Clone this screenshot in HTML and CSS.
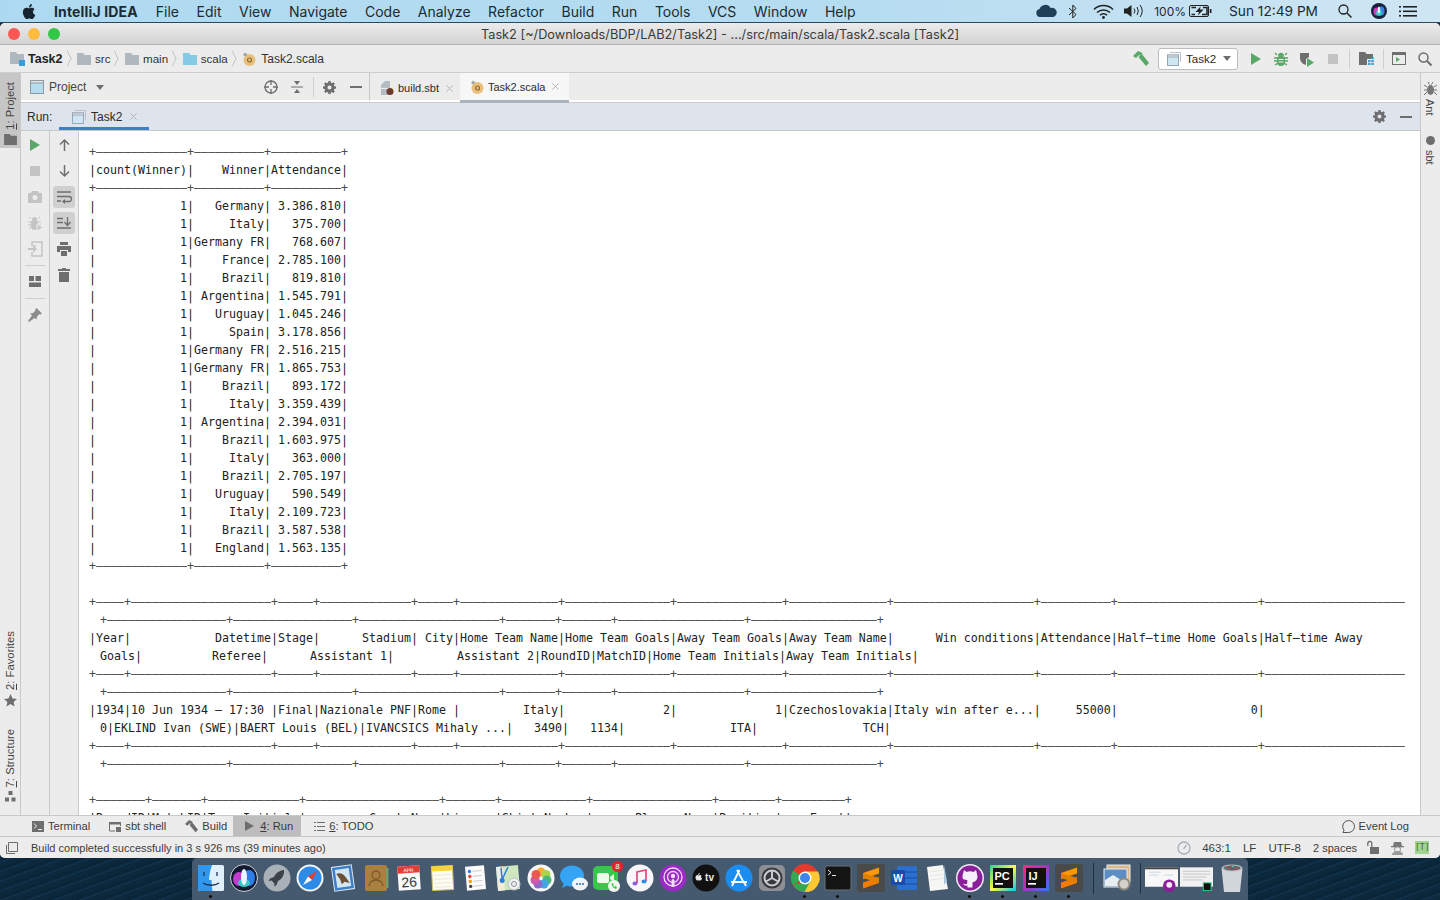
FILE: index.html
```html
<!DOCTYPE html>
<html lang="en">
<head>
    <meta charset="UTF-8">
    <title>IntelliJ IDEA - Task2</title>
    <link rel="stylesheet" href="styles.css">
</head>
<body>
    <svg class="defs" width="0" height="0">
        <symbol id="folder" viewBox="0 0 14 12"><path d="M0 0h6l1.500 2H14v10H0z"/></symbol>
        <symbol id="gear" viewBox="0 0 14 14"><path fill-rule="evenodd" d="M5.800 0h2.400l.3 1.900 1.100.5L11.200 1.300l1.600 1.600-1.100 1.600.5 1.100 1.800.3v2.300l-1.800.4-.5 1.100 1.100 1.600-1.600 1.600-1.600-1.100-1.100.5-.3 1.800H5.800l-.3-1.800-1.100-.5-1.600 1.100-1.600-1.600 1.100-1.600-.5-1.100L0 8.200V5.900l1.800-.3.5-1.100-1.100-1.600 1.600-1.600 1.600 1.100 1.100-.5zM7 4.800a2.200 2.200 0 1 0 0 4.400 2.200 2.200 0 0 0 0-4.400z"/></symbol>
        <symbol id="scala" viewBox="0 0 14 14"><circle cx="7.500" cy="8" r="6" fill="#e9bf7d"/><circle cx="7.500" cy="8" r="2" fill="none" stroke="#8a6a30" stroke-width="1.200"/><path d="M1 3l2-2.500 2.500 2L3 4.500z" fill="#9aa5ad"/></symbol>
        <symbol id="runconf" viewBox="0 0 14 14"><path d="M3 .5h10.500V10" fill="none" stroke="#b9c3cc"/><rect x=".5" y="3" width="11" height="10.500" fill="#cfe6f3" stroke="#9aa7b2"/><rect x=".5" y="3" width="11" height="2" fill="#e8edf1" stroke="#9aa7b2"/></symbol>
        <symbol id="cross" viewBox="0 0 10 10"><path d="M1.500 1.500l7 7M8.500 1.500l-7 7" fill="none" stroke="#b4b4b4" stroke-width="1.100"/></symbol>
        <symbol id="sublime" viewBox="0 0 30 30"><rect x="1" y="1" width="28" height="28" rx="3" fill="#4a4a4a"/><path d="M23 4.500v6L7 16v-6z" fill="#ff9800"/><path d="M7 25.500v-6l16-5.500v6z" fill="#f57c00"/><path d="M7 10l16 5v5L7 15z" fill="#e08000"/></symbol>
    </svg>

    <header class="menubar">
        <svg class="apple" viewBox="0 0 24 24"><path d="M18.700 12.600c0-2.500 2-3.700 2.100-3.800-1.200-1.700-3-1.900-3.600-1.900-1.500-.2-3 .9-3.800.9-.8 0-2-.9-3.300-.9-1.700 0-3.300 1-4.100 2.500-1.800 3.100-.5 7.600 1.300 10.100.9 1.200 1.900 2.600 3.200 2.500 1.300-.1 1.800-.8 3.300-.8s2 .8 3.300.8c1.400 0 2.200-1.200 3.100-2.500 1-1.400 1.400-2.800 1.400-2.900-.1 0-2.700-1-3-4zM16.200 5.200c.7-.9 1.200-2 1-3.200-1 0-2.200.7-2.900 1.500-.6.700-1.200 1.900-1 3 1.100.1 2.200-.5 2.900-1.300z"/></svg>
        <strong class="app-name">IntelliJ IDEA</strong>
        <nav class="menu">
            <span>File</span><span>Edit</span><span>View</span><span>Navigate</span><span>Code</span><span>Analyze</span><span>Refactor</span><span>Build</span><span>Run</span><span>Tools</span><span>VCS</span><span>Window</span><span>Help</span>
        </nav>
        <div class="status-items">
            <svg class="si-cloud" width="21" height="12" viewBox="0 0 21 12"><path d="M4 12a4 4 0 0 1-.5-7.900A6 6 0 0 1 14.500 3a4.500 4.500 0 0 1 3 9z" fill="#1f3f57"/></svg>
            <svg class="si-bt" width="10" height="15" viewBox="0 0 10 15"><path d="M1 4l7 6.500L4.800 14V1L8 4.500 1 11" fill="none" stroke="#222" stroke-width="1"/></svg>
            <svg class="si-wifi" width="21" height="15" viewBox="0 0 21 15"><g fill="none" stroke="#222" stroke-width="1.500"><path d="M1 5.500a13.500 13.500 0 0 1 19 0"/><path d="M4 8.500a9.500 9.500 0 0 1 13 0"/><path d="M7 11.300a5 5 0 0 1 7 0"/></g><circle cx="10.500" cy="13.500" r="1.400" fill="#222"/></svg>
            <svg class="si-vol" width="21" height="14" viewBox="0 0 21 14"><path d="M0 4.500h3L7.500 1v12L3 9.500H0z" fill="#222"/><g fill="none" stroke="#222"><path d="M10 4.500a4 4 0 0 1 0 5"/><path d="M13 3a7 7 0 0 1 0 8"/><path d="M16 1a10 10 0 0 1 0 12"/></g></svg>
            <span class="si-pct">100%</span>
            <svg class="si-batt" width="23" height="12" viewBox="0 0 23 12"><rect x=".5" y=".5" width="19" height="11" rx="1.500" fill="none" stroke="#222"/><path d="M2.500 2.500h4.500M2.500 9.500H6" stroke="#222" stroke-width="1.600"/><path d="M11.500 1.500L6.500 7h3.500l-1 3.500 5.500-6h-3.500z" fill="#222"/><path d="M14 2.500h4v7h-5" fill="none" stroke="#222" stroke-width="1.600"/><rect x="20.800" y="4" width="1.700" height="4" fill="#222"/></svg>
            <span class="si-clock">Sun 12:49 PM</span>
            <svg class="si-search" width="14" height="14" viewBox="0 0 14 14"><circle cx="5.500" cy="5.500" r="4.500" fill="none" stroke="#222" stroke-width="1.300"/><path d="M9 9l4.500 4.500" stroke="#222" stroke-width="1.500"/></svg>
            <svg class="si-siri" width="16" height="16" viewBox="0 0 16 16"><circle cx="8" cy="8" r="8" fill="#16203a"/><ellipse cx="5.500" cy="8.500" rx="3" ry="4" fill="#d63ac0"/><ellipse cx="10.500" cy="8" rx="3" ry="4.500" fill="#2f86e8"/><ellipse cx="8" cy="10" rx="3" ry="3" fill="#35c8c4"/><ellipse cx="8" cy="7" rx="1.200" ry="3.500" fill="#e9f6ff"/></svg>
            <svg class="si-list" width="18" height="11" viewBox="0 0 18 11"><g fill="#222"><rect width="2" height="1.600"/><rect y="4.500" width="2" height="1.600"/><rect y="9" width="2" height="1.600"/><rect x="4" width="14" height="1.600"/><rect x="4" y="4.500" width="14" height="1.600"/><rect x="4" y="9" width="14" height="1.600"/></g></svg>
        </div>
    </header>

    <main class="window">
        <div class="titlebar">
            <div class="lights"><i class="red"></i><i class="yellow"></i><i class="green"></i></div>
            <span>Task2 [~/Downloads/BDP/LAB2/Task2] - .../src/main/scala/Task2.scala [Task2]</span>
        </div>

        <div class="navbar">
            <div class="crumbs">
                <span class="crumb"><svg class="ic-folder" width="14" height="14" viewBox="0 0 14 14"><use href="#folder" width="14" height="12"/><rect x="9" y="8" width="6" height="6" fill="#389fd6"/></svg><b>Task2</b></span>
                <span class="crumb"><svg class="ic-folder" width="14" height="12"><use href="#folder"/></svg>src</span>
                <span class="crumb"><svg class="ic-folder" width="14" height="12"><use href="#folder"/></svg>main</span>
                <span class="crumb"><svg class="ic-folder blue" width="14" height="12"><use href="#folder"/></svg>scala</span>
                <span class="crumb last"><svg width="14" height="14"><use href="#scala"/></svg>Task2.scala</span>
            </div>
            <div class="nav-tools">
                <svg width="16" height="16" viewBox="0 0 16 16"><path d="M0 5l5-5 4.500 2L7.500 5 6 4 3 7z" fill="#59a869"/><path d="M5.500 6l3.500-3 7 9-3 3z" fill="#59a869"/></svg>
                <div class="run-select"><svg width="14" height="14"><use href="#runconf"/></svg><span>Task2</span><i class="caret"></i></div>
                <svg class="t-run" width="12" height="12" viewBox="0 0 12 12"><path d="M1 0l10 6-10 6z" fill="#59a869"/></svg>
                <svg class="t-bug" width="14" height="14" viewBox="0 0 14 14"><g fill="#59a869"><path d="M3 5h8v5a4 4 0 0 1-8 0z"/><circle cx="7" cy="3.500" r="2.800"/></g><g stroke="#59a869" stroke-width="1.400"><path d="M0 6h14M0 9h14M1 13l3-2M13 13l-3-2M1 1l2 2M13 1l-2 2"/></g><path d="M4.500 7.500h5M4.500 10h5" stroke="#eee"/></svg>
                <svg class="t-cov" width="16" height="16" viewBox="0 0 16 16"><path d="M1 2h9v4L7 8v6C3 13 1 10 1 7z" fill="#6e6e6e"/><path d="M8 7l7 4.500L8 16z" fill="#59a869"/></svg>
                <i class="t-stop"></i>
                <i class="vsep"></i>
                <svg width="15" height="13" viewBox="0 0 15 13"><path d="M0 0h6l1.500 2H14v5H8v6H0z" fill="#6e6e6e"/><g fill="#389fd6"><rect x="9" y="8" width="2.500" height="2.200"/><rect x="12.300" y="8" width="2.500" height="2.200"/><rect x="9" y="11" width="2.500" height="2"/><rect x="12.300" y="11" width="2.500" height="2"/><rect x="12.300" y="5" width="2.500" height="2.200"/></g></svg>
                <i class="vsep second"></i>
                <svg width="14" height="13" viewBox="0 0 14 13"><rect x=".5" y=".5" width="13" height="12" fill="none" stroke="#6e6e6e"/><rect y="0" width="14" height="3" fill="#6e6e6e"/><path d="M4 5l4 2.500L4 10z" fill="#59a869"/></svg>
                <svg class="t-find" width="14" height="14" viewBox="0 0 14 14"><circle cx="5.500" cy="5.500" r="4.500" fill="none" stroke="#6e6e6e" stroke-width="1.500"/><path d="M9 9l4.500 4.500" stroke="#6e6e6e" stroke-width="2"/></svg>
            </div>
        </div>

        <div class="workspace">
            <aside class="strip left">
                <div class="strip-btn active"><span class="vtext"><u>1</u>: Project</span><svg width="13" height="11"><use href="#folder"/></svg></div>
                <div class="strip-btn favorites"><span class="vtext"><u>2</u>: Favorites</span><svg width="13" height="13" viewBox="0 0 13 13"><path d="M6.500 0l2 4.500 4.500.4-3.400 3 1 4.600-4.100-2.400-4.100 2.400 1-4.600L0 4.900l4.500-.4z"/></svg></div>
                <div class="strip-btn"><span class="vtext"><u>7</u>: Structure</span><svg width="11" height="11" viewBox="0 0 11 11"><rect x="3.500" width="4" height="4"/><rect y="6.500" width="4" height="4"/><rect x="6.500" y="6.500" width="4" height="4"/></svg></div>
            </aside>

            <div class="center">
                <div class="top-row">
                    <div class="project-head">
                        <svg class="proj-ic" width="14" height="14" viewBox="0 0 14 14"><rect x=".5" y=".5" width="13" height="13" fill="#b5dcef" stroke="#8d99a3"/><rect x=".5" y=".5" width="13" height="2.500" fill="#e5e5e5" stroke="#8d99a3"/></svg>
                        <span>Project</span><i class="caret"></i>
                        <div class="head-tools">
                            <svg class="target" width="14" height="14" viewBox="0 0 14 14"><circle cx="7" cy="7" r="6" fill="none" stroke="#6e6e6e" stroke-width="1.300"/><path d="M7 0v5M7 9v5M0 7h5M9 7h5" stroke="#6e6e6e" stroke-width="1.300"/></svg>
                            <svg width="12" height="12" viewBox="0 0 12 12"><path d="M0 6h12" stroke="#6e6e6e"/><path d="M3 0h6L6 4zM3 12h6L6 8z" fill="#6e6e6e"/></svg>
                            <i class="vsep"></i>
                            <svg class="gear" width="13" height="13"><use href="#gear"/></svg>
                            <i class="dash"></i>
                        </div>
                    </div>
                    <div class="editor-tabs">
                        <div class="etab">
                            <svg width="13" height="14" viewBox="0 0 13 14"><path d="M4 0h5v7H0V4z" fill="#b5bcc2"/><path d="M0 8h7v6H0z" fill="#b5bcc2"/><circle cx="9" cy="10.500" r="3.500" fill="#6b3a2e"/></svg>
                            <span>build.sbt</span><svg width="9" height="9"><use href="#cross"/></svg>
                        </div>
                        <div class="etab current">
                            <svg width="14" height="14"><use href="#scala"/></svg>
                            <span>Task2.scala</span><svg width="9" height="9"><use href="#cross"/></svg>
                        </div>
                    </div>
                </div>

                <div class="run-head">
                    <span class="run-label">Run:</span>
                    <div class="run-tab">
                        <svg width="14" height="14"><use href="#runconf"/></svg>
                        <span>Task2</span><svg width="9" height="9"><use href="#cross"/></svg>
                    </div>
                    <div class="head-tools">
                        <svg class="gear" width="13" height="13"><use href="#gear"/></svg>
                        <i class="dash"></i>
                    </div>
                </div>

                <div class="run-body">
                    <div class="tool-col">
                        <div class="tool"><svg width="12" height="12" viewBox="0 0 12 12"><path d="M1 0l10 6-10 6z" fill="#59a869"/></svg></div>
                        <div class="tool"><i class="t-stop"></i></div>
                        <div class="tool"><svg width="14" height="12" viewBox="0 0 14 12"><path fill-rule="evenodd" d="M4 0h6l1 2h3v10H0V2h3zM7 4a2.500 2.500 0 1 0 0 5 2.500 2.500 0 0 0 0-5z" fill="#c4c4c4"/></svg></div>
                        <div class="tool"><svg width="15" height="15" viewBox="0 0 15 15"><g fill="#c4c4c4"><path d="M3 5h7v5a3.500 4 0 0 1-7 0z"/><circle cx="6.500" cy="3.500" r="2.500"/></g><g stroke="#c4c4c4"><path d="M0 6h13M0 9h13M1 13l2-2M1 1l2 2M12 1l-2 2"/></g><path d="M9 8l6 3.500L9 15z" fill="#c4c4c4" stroke="#eee"/></svg></div>
                        <div class="tool"><svg width="15" height="14" viewBox="0 0 15 14"><path d="M4 4V0h10v14H4v-4M5 4h3" fill="none" stroke="#c4c4c4" stroke-width="1.500"/><path d="M0 6h5V3l4 4-4 4V8H0z" fill="#c4c4c4"/></svg></div>
                        <i class="hsep"></i>
                        <div class="tool"><svg width="12" height="12" viewBox="0 0 12 12"><path d="M0 0h5v5H0zM6.500 0H12v5H6.500zM0 6.500h12V11H0z" fill="#6e6e6e"/></svg></div>
                        <i class="hsep"></i>
                        <div class="tool"><svg width="14" height="14" viewBox="0 0 14 14"><path d="M8.500 0L14 5.500l-1.500 1-1-.5L9 8.500l-.5 3L6.500 10 1 14 0 13l4-5.500-2-2 3-.5 2.500-2.500-.5-1z" fill="#8c8c8c"/></svg></div>
                    </div>
                    <div class="tool-col">
                        <div class="tool"><svg width="11" height="12" viewBox="0 0 11 12"><path d="M5.500 12V1M1 5.500L5.500 1 10 5.500" fill="none" stroke="#6e6e6e" stroke-width="1.500"/></svg></div>
                        <div class="tool"><svg width="11" height="12" viewBox="0 0 11 12"><path d="M5.500 0v11M1 6.500L5.500 11 10 6.500" fill="none" stroke="#6e6e6e" stroke-width="1.500"/></svg></div>
                        <div class="tool on"><svg width="14" height="12" viewBox="0 0 14 12"><path d="M0 1h14M0 5.500h12a2.500 2.500 0 0 1 0 5H7M0 10h4" fill="none" stroke="#6e6e6e" stroke-width="1.300"/><path d="M8 8v5L5 10.500z" fill="#6e6e6e"/></svg></div>
                        <div class="tool on"><svg width="14" height="12" viewBox="0 0 14 12"><path d="M0 1.500h6M0 5.500h6M0 11h14M10.500 0v8M7.500 5l3 3.500 3-3.500" fill="none" stroke="#6e6e6e" stroke-width="1.300"/></svg></div>
                        <div class="tool"><svg width="14" height="14" viewBox="0 0 14 14"><path d="M3 0h8v3H3zM0 4h14v6h-3V8H3v2H0zM4 9h6v5H4z" fill="#6e6e6e"/></svg></div>
                        <div class="tool"><svg width="12" height="14" viewBox="0 0 12 14"><path d="M4 0h4v1h4v2H0V1h4zM1 4h10v10H1z" fill="#6e6e6e"/></svg></div>
                    </div>
<pre class="console"><span class="rule">+–––––––––––––+––––––––––+––––––––––+</span>
|count(Winner)|    Winner|Attendance|
<span class="rule">+–––––––––––––+––––––––––+––––––––––+</span>
|            1|   Germany| 3.386.810|
|            1|     Italy|   375.700|
|            1|Germany FR|   768.607|
|            1|    France| 2.785.100|
|            1|    Brazil|   819.810|
|            1| Argentina| 1.545.791|
|            1|   Uruguay| 1.045.246|
|            1|     Spain| 3.178.856|
|            1|Germany FR| 2.516.215|
|            1|Germany FR| 1.865.753|
|            1|    Brazil|   893.172|
|            1|     Italy| 3.359.439|
|            1| Argentina| 2.394.031|
|            1|    Brazil| 1.603.975|
|            1|     Italy|   363.000|
|            1|    Brazil| 2.705.197|
|            1|   Uruguay|   590.549|
|            1|     Italy| 2.109.723|
|            1|    Brazil| 3.587.538|
|            1|   England| 1.563.135|
<span class="rule">+–––––––––––––+––––––––––+––––––––––+</span>

<span class="rule">+––––+––––––––––––––––––––+–––––+–––––––––––––+–––––+––––––––––––––+–––––––––––––––+–––––––––––––––+––––––––––––––+––––––––––––––––––––+––––––––––+––––––––––––––––––––+––––––––––––––––––––</span>
<span class="wrap rule">+–––––––––––––––––+–––––––––––––––––+––––––––––––––––––––+–––––––+–––––––+––––––––––––––––––+––––––––––––––––––+</span>
|Year|            Datetime|Stage|      Stadium| City|Home Team Name|Home Team Goals|Away Team Goals|Away Team Name|      Win conditions|Attendance|Half–time Home Goals|Half–time Away
<span class="wrap">Goals|          Referee|      Assistant 1|         Assistant 2|RoundID|MatchID|Home Team Initials|Away Team Initials|</span>
<span class="rule">+––––+––––––––––––––––––––+–––––+–––––––––––––+–––––+––––––––––––––+–––––––––––––––+–––––––––––––––+––––––––––––––+––––––––––––––––––––+––––––––––+––––––––––––––––––––+––––––––––––––––––––</span>
<span class="wrap rule">+–––––––––––––––––+–––––––––––––––––+––––––––––––––––––––+–––––––+–––––––+––––––––––––––––––+––––––––––––––––––+</span>
|1934|10 Jun 1934 – 17:30 |Final|Nazionale PNF|Rome |         Italy|              2|              1|Czechoslovakia|Italy win after e...|     55000|                   0|
<span class="wrap">0|EKLIND Ivan (SWE)|BAERT Louis (BEL)|IVANCSICS Mihaly ...|   3490|   1134|               ITA|               TCH|</span>
<span class="rule">+––––+––––––––––––––––––––+–––––+–––––––––––––+–––––+––––––––––––––+–––––––––––––––+–––––––––––––––+––––––––––––––+––––––––––––––––––––+––––––––––+––––––––––––––––––––+––––––––––––––––––––</span>
<span class="wrap rule">+–––––––––––––––––+–––––––––––––––––+––––––––––––––––––––+–––––––+–––––––+––––––––––––––––––+––––––––––––––––––+</span>

<span class="rule">+–––––––+–––––––+–––––––––––––+–––––––––––––––––––+–––––––+––––––––––––+–––––––––––––––––+––––––––+–––––––––+</span>
|RoundID|MatchID|Team Initials|         Coach Name|Line–up|Shirt Number|      Player Name|Position|    Event|
</pre>
                </div>
            </div>

            <aside class="strip right">
                <div class="strip-btn"><svg width="13" height="14" viewBox="0 0 13 14"><g stroke="#777" fill="none"><path d="M0 3l3 2M13 3l-3 2M0 8h3M13 8h-3M0 13l3-3M13 13l-3-3M4 0l1.500 2.500M9 0L7.500 2.500"/></g><ellipse cx="6.500" cy="8" rx="3.500" ry="5" fill="#777"/></svg><span class="vtext down">Ant</span></div>
                <div class="strip-btn sbt"><i class="dot"></i><span class="vtext down">sbt</span></div>
            </aside>
        </div>

        <div class="tool-bar">
            <div class="tw"><svg width="12" height="11" viewBox="0 0 12 11"><rect width="12" height="11" fill="#6e6e6e"/><path d="M2 2.500L4.500 5 2 7.500M6 8.500h4" fill="none" stroke="#eee"/></svg><span>Terminal</span></div>
            <div class="tw"><svg width="12" height="11" viewBox="0 0 12 11"><path d="M.5 10V1.500h11V5M.5 10H6" fill="none" stroke="#6e6e6e"/><rect y="1" width="12" height="2.500" fill="#6e6e6e"/><rect x="7" y="6" width="5" height="5" fill="#6e6e6e"/></svg><span>sbt shell</span></div>
            <div class="tw"><svg width="13" height="13" viewBox="0 0 16 16"><path d="M0 5l5-5 4.500 2L7.500 5 6 4 3 7z" fill="#6e6e6e"/><path d="M5.500 6l3.500-3 7 9-3 3z" fill="#6e6e6e"/></svg><span>Build</span></div>
            <div class="tw active"><svg width="9" height="10" viewBox="0 0 9 10"><path d="M0 0l9 5-9 5z" fill="#6e6e6e"/></svg><span><u>4</u>: Run</span></div>
            <div class="tw"><svg width="11" height="9" viewBox="0 0 11 9"><path d="M0 .5h2M3 .5h8M0 4.500h2M3 4.500h8M0 8.500h2M3 8.500h8" stroke="#6e6e6e"/></svg><span><u>6</u>: TODO</span></div>
            <div class="tw event"><svg width="13" height="13" viewBox="0 0 13 13"><path d="M6.500.5a6 6 0 1 1 0 12H1l1-2.200A6 6 0 0 1 6.500.5z" fill="none" stroke="#555"/></svg><span>Event Log</span></div>
        </div>

        <div class="status-bar">
            <svg class="box-ic" width="12" height="12" viewBox="0 0 12 12"><path d="M2.500.5h9v9h-9zM.5 3v8.500H9" fill="none" stroke="#6e6e6e"/></svg>
            <span class="build-msg">Build completed successfully in 3 s 926 ms (39 minutes ago)</span>
            <div class="status-right">
                <svg width="14" height="14" viewBox="0 0 14 14"><circle cx="7" cy="7" r="6" fill="none" stroke="#a7b1b9" stroke-width="1.300"/><path d="M6.500 8l3-4" stroke="#a7b1b9" stroke-width="1.300"/></svg>
                <span class="pos">463:1</span>
                <span>LF</span>
                <span>UTF-8</span>
                <span class="indent">2 spaces</span>
                <svg class="lock" width="12" height="13" viewBox="0 0 12 13"><path d="M.8 5V2.500a2 2 0 0 1 4 0V6" fill="none" stroke="#6e6e6e" stroke-width="1.300"/><rect x="3" y="6" width="9" height="7" fill="#6e6e6e"/></svg>
                <svg width="13" height="14" viewBox="0 0 13 14"><path d="M3 1h7l1 4H2z" fill="#777"/><rect y="5" width="13" height="1.300" fill="#777"/><circle cx="6.500" cy="8.500" r="3" fill="none" stroke="#888"/><path d="M1 14a5.500 4 0 0 1 11 0" fill="#999"/></svg>
                <span class="t-badge">[T]</span>
            </div>
        </div>
    </main>

    <footer class="dock-area">
        <div class="dock">
            <div class="app on"><svg viewBox="0 0 30 30"><rect x="2" y="2" width="26" height="26" rx="1.500" fill="#dff0fb"/><path d="M2 3.500A1.500 1.500 0 0 1 3.500 2H16c-2 6-3 11-3 15h2.500c0 4 .5 7.500 1 11h-13A1.500 1.500 0 0 1 2 26.500z" fill="#2f97ee"/><path d="M8 9v4M21 9v4M7 20c4 3 12 3 16 0" fill="none" stroke="#1b3552" stroke-width="1.300"/></svg></div>
            <div class="app"><svg viewBox="0 0 30 30"><circle cx="15" cy="15" r="13.500" fill="#121a30" stroke="#cfd3da"/><ellipse cx="10" cy="16" rx="6" ry="7" fill="#c43bd0"/><ellipse cx="20" cy="15" rx="6" ry="8" fill="#2f7de8"/><ellipse cx="15" cy="20" rx="6" ry="4" fill="#35c8c4"/><ellipse cx="15" cy="14" rx="3" ry="8" fill="#e8f4ff"/></svg></div>
            <div class="app"><svg viewBox="0 0 30 30"><circle cx="15" cy="15" r="13.500" fill="#a9b1b8"/><path d="M22 7c-5 .5-8 3-10 7l-4 1.500L6.500 18l3-.5 3 3-.5 3 2.500-1.500L16 18c4-2 6.500-6 6-11z" fill="#3d4248"/></svg></div>
            <div class="app"><svg viewBox="0 0 30 30"><circle cx="15" cy="15" r="13.500" fill="#f4f7fa"/><circle cx="15" cy="15" r="11.500" fill="#2d8ae6"/><path d="M22 8l-9 5.500 4 3.500z" fill="#f03a2e"/><path d="M8 22l9-5-4-3.500z" fill="#fff"/></svg></div>
            <div class="app"><svg viewBox="0 0 30 30"><g transform="rotate(-8 15 15)"><rect x="5" y="3" width="20" height="24" fill="#3d7fc9" stroke="#dbe8f4"/><rect x="8" y="6" width="14" height="18" fill="#d5e6f3"/><path d="M9 10c4-1 7 1 9 5l3 6-5-2-3 2-1-5z" fill="#6b5136"/></g></svg></div>
            <div class="app"><svg viewBox="0 0 30 30"><rect x="4" y="2" width="22" height="26" rx="2" fill="#a9803f"/><rect x="25" y="5" width="2.500" height="20" fill="#6f9f6a"/><circle cx="15" cy="12" r="4" fill="none" stroke="#7a5a28" stroke-width="1.300"/><path d="M8 23a7 6 0 0 1 14 0" fill="none" stroke="#7a5a28" stroke-width="1.300"/></svg></div>
            <div class="app"><svg viewBox="0 0 30 30"><g transform="rotate(-4 15 15)"><rect x="4" y="3" width="22" height="24" fill="#f8f8f8"/><rect x="4" y="3" width="22" height="7" fill="#e53b35"/><text x="15" y="9" class="cal-m">APR</text><text x="15" y="24" class="cal-d">26</text></g></svg></div>
            <div class="app"><svg viewBox="0 0 30 30"><g transform="rotate(-3 15 15)"><rect x="5" y="3" width="21" height="24" fill="#fdfcf1" stroke="#cdbd66"/><rect x="5" y="3" width="21" height="5" fill="#f7d33e"/><path d="M7 12h17M7 16h17M7 20h17M7 24h17" stroke="#e5e2cf" stroke-width=".7"/></g></svg></div>
            <div class="app"><svg viewBox="0 0 30 30"><g transform="rotate(-5 15 15)"><rect x="6" y="3" width="19" height="24" fill="#fbfbfb"/><circle cx="10" cy="8" r="1.700" fill="#3478f6"/><circle cx="10" cy="13" r="1.700" fill="#ef3b30"/><circle cx="10" cy="18" r="1.700" fill="#f79a00"/><circle cx="10" cy="23" r="1.700" fill="#444"/><path d="M13 8h9M13 13h9M13 18h9M13 23h9" stroke="#ccc"/></g></svg></div>
            <div class="app"><svg viewBox="0 0 30 30"><g transform="rotate(-5 15 15)"><rect x="4" y="3" width="22" height="24" fill="#cfe7bf"/><path d="M4 3h7v24H4z" fill="#f3ecd9"/><path d="M9 4v12M16 4L9 16" stroke="#2a7de1" stroke-width="1.500"/><circle cx="9" cy="17" r="2.500" fill="#2a7de1"/></g><circle cx="21" cy="21" r="6" fill="#eef0f2" stroke="#b9bec4"/><circle cx="21" cy="21" r="2.500" fill="none" stroke="#8b9096"/></svg></div>
            <div class="app"><svg viewBox="0 0 30 30"><circle cx="15" cy="15" r="13.500" fill="#f7f7f7"/><g opacity=".9"><circle cx="15" cy="9" r="4.500" fill="#f7a823"/><circle cx="20" cy="11.500" r="4.500" fill="#a6cf3b"/><circle cx="21" cy="17" r="4.500" fill="#38b36b"/><circle cx="18" cy="21" r="4.500" fill="#2f9ee3"/><circle cx="12" cy="21" r="4.500" fill="#7f5bc9"/><circle cx="9" cy="17" r="4.500" fill="#cc4aa3"/><circle cx="10" cy="11.500" r="4.500" fill="#e9483e"/></g></svg></div>
            <div class="app"><svg viewBox="0 0 30 30"><ellipse cx="13" cy="13" rx="12" ry="10.500" fill="#35a4f5"/><path d="M5 20l-2 5 6-3z" fill="#35a4f5"/><ellipse cx="21" cy="21" rx="8" ry="6.500" fill="#f0f4f8"/><circle cx="18" cy="21" r="1" fill="#2d6db5"/><circle cx="21" cy="21" r="1" fill="#2d6db5"/><circle cx="24" cy="21" r="1" fill="#2d6db5"/></svg></div>
            <div class="app"><svg viewBox="0 0 30 30"><rect x="1" y="3" width="25" height="24" rx="5" fill="#35c84a"/><rect x="5" y="10" width="12" height="10" rx="2" fill="#eafbe9"/><path d="M18 14l4-3v8l-4-3z" fill="#eafbe9"/><circle cx="22" cy="23" r="6" fill="#f2f5f2"/><path d="M20 20c-1 2 1 5 4 6l1-2-2-1-1 1-1-2 1-1z" fill="#35c84a"/></svg><span class="badge">8</span></div>
            <div class="app"><svg viewBox="0 0 30 30"><circle cx="15" cy="15" r="13.500" fill="#f7f7f9"/><path d="M12 20V9l9-2v11" fill="none" stroke="#e3487e" stroke-width="1.700"/><ellipse cx="10" cy="20.500" rx="2.500" ry="2" fill="#8e5be0"/><ellipse cx="19" cy="18.500" rx="2.500" ry="2" fill="#2f8de8"/></svg></div>
            <div class="app"><svg viewBox="0 0 30 30"><circle cx="15" cy="15" r="13.500" fill="#9a2bc4"/><g fill="none" stroke="#f3dcfb" stroke-width="1.300"><circle cx="15" cy="14" r="9"/><circle cx="15" cy="14" r="5.500"/></g><circle cx="15" cy="13" r="2.200" fill="#f3dcfb"/><rect x="13.500" y="16" width="3" height="8" rx="1.500" fill="#f3dcfb"/></svg></div>
            <div class="app"><svg viewBox="0 0 30 30"><circle cx="15" cy="15" r="13.500" fill="#111"/><path d="M10.500 12.500c-.3-.2-.8-.4-1.300-.4-.6 0-1 .4-1.500.4s-.9-.4-1.400-.4c-1 0-1.800 1-1.800 2.400 0 1.600 1 3 1.800 3 .5 0 .8-.3 1.400-.3s.9.300 1.500.3c.8 0 1.500-1 1.800-2-1.100-.6-1.200-2.300-.5-2.900zM8.300 11.500c.4-.5.600-1 .5-1.500-.5 0-1 .3-1.300.7-.3.3-.5.800-.5 1.300.5 0 1-.2 1.300-.5z" fill="#e8e8e8"/><text x="18.500" y="18" class="tv">tv</text></svg></div>
            <div class="app"><svg viewBox="0 0 30 30"><circle cx="15" cy="15" r="13.500" fill="#1b8cf0"/><path d="M15.500 7L9 20M13 7l7 13M7 19h16M20 19l2 4M10 19l-2 4" stroke="#fff" stroke-width="1.800" fill="none"/></svg></div>
            <div class="app"><svg viewBox="0 0 30 30"><rect x="2" y="2" width="26" height="26" rx="5" fill="#8c8f93"/><circle cx="15" cy="15" r="10.500" fill="#35383c"/><circle cx="15" cy="15" r="7.500" fill="none" stroke="#c9ccd0" stroke-width="2"/><path d="M15 8v7l6 3.500M15 15l-6 3.500" stroke="#c9ccd0" stroke-width="2" fill="none"/></svg></div>
            <div class="app on"><svg viewBox="0 0 30 30"><circle cx="15" cy="15" r="14" fill="#e33b2e"/><path d="M15 15L2.900 22A14 14 0 0 1 3 7.800z" fill="#34a853"/><path d="M15 15l-.5 14A14 14 0 0 0 28 8.500H15z" fill="#fcc934"/><path d="M2.900 22A14 14 0 0 0 14.500 29L21 17z" fill="#34a853"/><circle cx="15" cy="15" r="6.500" fill="#fff"/><circle cx="15" cy="15" r="5" fill="#3f86ea"/></svg></div>
            <div class="app on"><svg viewBox="0 0 30 30"><rect x="2" y="3" width="26" height="24" rx="2" fill="#141414" stroke="#6b6f73"/><path d="M5 7l3 2.500L5 12" stroke="#e8e8e8" fill="none"/><path d="M9 12.500h4" stroke="#e8e8e8"/></svg></div>
            <div class="app"><svg viewBox="0 0 30 30"><use href="#sublime"/></svg></div>
            <div class="app"><svg viewBox="0 0 30 30"><rect x="8" y="3" width="20" height="24" rx="1.500" fill="#2b6fd0"/><path d="M8 9h20M8 15h20M8 21h20" stroke="#1a4f9f"/><rect x="2" y="7" width="14" height="15" rx="1.500" fill="#1b4ba8"/><text x="9" y="19" class="word">W</text></svg></div>
            <div class="app"><svg viewBox="0 0 30 30"><path d="M5 4l16-2 5 24-18 2z" fill="#f6f6f4"/><path d="M8 9l14-2M8 13l15-2M9 17l15-2" stroke="#dedede" stroke-width=".7"/><path d="M22 2l3 16-3 4z" fill="#a9c7d8"/></svg></div>
            <div class="app on"><svg viewBox="0 0 30 30"><circle cx="15" cy="15" r="14" fill="#f1e9f6"/><circle cx="15" cy="15" r="12.500" fill="#8a1f9a"/><path d="M9 7l2.500 2a10 10 0 0 1 7 0L21 7l1 4c1 3 .5 6-2 7.500-1 .5-2 .8-2.500 1v5h-5v-2c-2 .5-3.500 0-4.500-2 1 .5 2 1 4 .5l.5-3.500c-.5-.2-1.500-.5-2.500-1C7.500 17 7 14 8 11z" fill="#f6eef9"/></svg></div>
            <div class="app on"><svg viewBox="0 0 30 30"><defs><linearGradient id="pc" x1="0" y1="0" x2="1" y2="1"><stop offset="0" stop-color="#21d789"/><stop offset=".5" stop-color="#fcf84a"/><stop offset="1" stop-color="#07c3f2"/></linearGradient></defs><rect x="2" y="2" width="26" height="26" fill="url(#pc)"/><rect x="5" y="5" width="20" height="20" fill="#111"/><text x="6.500" y="16.500" class="jb">PC</text><rect x="7" y="20" width="8" height="1.700" fill="#fff"/></svg></div>
            <div class="app on"><svg viewBox="0 0 30 30"><defs><linearGradient id="ij" x1="0" y1="0" x2="1" y2="1"><stop offset="0" stop-color="#fc2a7e"/><stop offset=".5" stop-color="#ad2fc4"/><stop offset="1" stop-color="#2a7df0"/></linearGradient></defs><rect x="2" y="2" width="26" height="26" fill="url(#ij)"/><rect x="5" y="5" width="20" height="20" fill="#111"/><text x="7.500" y="16.500" class="jb">IJ</text><rect x="7" y="20" width="8" height="1.700" fill="#fff"/></svg></div>
            <div class="app on"><svg viewBox="0 0 30 30"><use href="#sublime"/></svg></div>
            <i class="dock-sep"></i>
            <div class="app"><svg viewBox="0 0 30 30"><rect x="5" y="2" width="23" height="17" fill="#d9b98c" stroke="#eee"/><rect x="2" y="6" width="23" height="18" fill="#5c8dc4" stroke="#eee"/><path d="M3 17l8-5 13 8v3H3z" fill="#e7edf1"/><circle cx="22" cy="21" r="6.500" fill="#8f8a7f"/><circle cx="22" cy="21" r="4.500" fill="#d3d0c8"/></svg></div>
            <i class="dock-sep after"></i>
            <div class="app thumb"><svg viewBox="0 0 34 30"><rect y="4" width="34" height="20" fill="#f7f7f7"/><rect y="4" width="34" height="2" fill="#444"/><path d="M4 9h12M4 12h10M20 12h9" stroke="#c5d0da" stroke-width=".8"/><circle cx="25" cy="23" r="6.500" fill="#8a1f9a"/><circle cx="25" cy="22" r="3" fill="#f6eef9"/></svg></div>
            <div class="app thumb"><svg viewBox="0 0 34 30"><rect y="4" width="34" height="20" fill="#f1f1f1"/><path d="M3 8h28M3 11h28M3 14h24M3 17h20" stroke="#bbb" stroke-width=".8"/><rect x="24" y="20" width="8" height="8" fill="#111" stroke="#21d789"/></svg></div>
            <div class="app"><svg viewBox="0 0 30 30"><path d="M4.500 5h21l-2.500 24H7z" fill="#dfe3e4" opacity=".9"/><ellipse cx="15" cy="5" rx="10.500" ry="3.500" fill="#b8bcbf"/><ellipse cx="15" cy="5" rx="8.500" ry="2.500" fill="#5f6468"/><path d="M9 4h2M13 3h3M18 5h3M11 6h2" stroke="#d94a4a" stroke-width="1"/><path d="M15 3.500h2M8 5.500h1" stroke="#4fc3d9" stroke-width="1"/></svg></div>
        </div>
    </footer>
</body>
</html>
```

FILE: styles.css
```css
* {
    box-sizing: border-box;
}
html, body {
    height: 100%;
}
body {
    margin: 0;
    display: flex;
    flex-direction: column;
    overflow: hidden;
    font-family: "Liberation Sans", Arial, sans-serif;
    font-size: 12px;
    color: #2b2b2b;
    background: #0d2a40;
}
i {
    display: block;
}
svg {
    display: block;
    flex: none;
    overflow: visible;
}
.defs {
    position: absolute;
}

/* mac menu bar */
.menubar {
    height: 23px;
    flex: none;
    display: flex;
    align-items: center;
    padding-left: 19px;
    font-family: Inter, sans-serif;
    font-size: 14px;
    color: #1c2a33;
    background: linear-gradient(90deg, #aedaf1 0%, #b6dcf0 60%, #cfe6f3 100%);
    border-bottom: 1px solid #2c4a5e;
}
.apple {
    width: 18px;
    height: 19px;
    fill: #16242e;
}
.app-name {
    margin-left: 17px;
    font-weight: 700;
    letter-spacing: .15px;
}
.menu {
    display: flex;
    gap: 17.500px;
    margin-left: 18px;
}
.status-items {
    margin-left: auto;
    display: flex;
    align-items: center;
    padding-right: 23px;
    font-size: 13px;
}
.si-bt { margin-left: 11px; }
.si-wifi { margin-left: 15px; }
.si-vol { margin-left: 10px; }
.si-pct { margin-left: 9px; font-size: 12px; }
.si-batt { margin-left: 3px; }
.si-clock { margin-left: 17px; font-size: 13.700px; }
.si-search { margin-left: 20px; }
.si-siri { margin-left: 19px; }
.si-list { margin-left: 12px; }

/* ide window */
.window {
    height: 835px;
    flex: none;
    display: flex;
    flex-direction: column;
    background: #ececec;
    border-radius: 5px;
    overflow: hidden;
}
.titlebar {
    height: 22px;
    flex: none;
    position: relative;
    display: flex;
    align-items: center;
    justify-content: center;
    padding-top: 1px;
    font-family: Inter, sans-serif;
    font-size: 12.750px;
    color: #3a3a3a;
    background: linear-gradient(#ebebeb, #d3d3d3);
    border-bottom: 1px solid #b1b1b1;
}
.lights {
    position: absolute;
    left: 8px;
    top: 5px;
    display: flex;
    gap: 8px;
}
.lights i {
    width: 12px;
    height: 12px;
    border-radius: 50%;
}
.red { background: #fc5753; }
.yellow { background: #fdbc40; }
.green { background: #33c748; }

.navbar {
    height: 28px;
    flex: none;
    display: flex;
    align-items: center;
    justify-content: space-between;
    padding: 0 8px 0 10px;
    background: #ececec;
    border-bottom: 1px solid #cdcdcd;
}
.crumbs {
    display: flex;
    align-items: center;
}
.crumb {
    display: flex;
    align-items: center;
    gap: 4px;
    font-size: 11.600px;
    color: #333;
}
.crumb::after {
    content: "";
    width: 10px;
    height: 10px;
    margin: 0 4.500px 0 -5px;
    border-top: 1px solid #b5b5b5;
    border-right: 1px solid #b5b5b5;
    transform: scaleX(.5) rotate(45deg);
}
.crumb.last {
    gap: 5px;
    font-size: 12px;
}
.crumb.last::after {
    display: none;
}
.ic-folder {
    fill: #afb8bf;
}
.ic-folder.blue {
    fill: #86cbe6;
}
.crumb b {
    font-size: 12.500px;
    color: #222;
}
.nav-tools {
    display: flex;
    align-items: center;
}
.run-select {
    width: 80px;
    height: 22px;
    margin: 0 12px 0 9px;
    display: flex;
    align-items: center;
    padding: 0 6px 0 8px;
    gap: 5px;
    background: #fff;
    border: 1px solid #bdbdbd;
    border-radius: 3px;
}
.run-select span {
    font-size: 11.500px;
}
.caret {
    width: 0;
    height: 0;
    border-left: 4.500px solid transparent;
    border-right: 4.500px solid transparent;
    border-top: 5px solid #6e6e6e;
}
.run-select .caret {
    margin-left: auto;
}
.t-stop {
    width: 10px;
    height: 10px;
    background: #c4c4c4;
}
.t-bug { margin-left: 12px; }
.t-cov { margin-left: 11px; }
.t-find { margin-left: 12px; }
.nav-tools .t-stop { margin-left: 13px; }
.nav-tools .vsep { margin: 0 9px 0 11px; }
.nav-tools .vsep.second { margin: 0 8px 0 9px; }
.vsep {
    width: 1px;
    height: 20px;
    background: #cfcfcf;
}

.workspace {
    flex: 1;
    min-height: 0;
    display: flex;
}
.strip {
    width: 20px;
    flex: none;
    display: flex;
    flex-direction: column;
    background: #ececec;
}
.strip.left {
    width: 21px;
    padding-bottom: 9px;
    border-right: 1px solid #c9c9c9;
}
.strip.right {
    border-left: 1px solid #c9c9c9;
    padding: 9px 1px 0 0;
    align-items: center;
}
.strip-btn {
    display: flex;
    flex-direction: column;
    align-items: center;
    gap: 4px;
    padding: 6px 0 4px;
    fill: #6e6e6e;
    color: #444;
    font-size: 11.300px;
}
.strip-btn.active {
    padding-top: 9px;
    padding-bottom: 3px;
    background: #c6c6c6;
}
.strip-btn.favorites {
    margin-top: auto;
    margin-bottom: 12px;
}
.strip.right .strip-btn {
    padding: 0;
    gap: 3px;
    font-size: 11px;
}
.strip.right .sbt {
    margin-top: 20px;
    gap: 5px;
}
.vtext {
    writing-mode: vertical-rl;
    transform: rotate(180deg);
    line-height: 20px;
}
.vtext.down {
    transform: none;
}
.dot {
    width: 9px;
    height: 9px;
    border-radius: 50%;
    background: #6e6e6e;
}

.center {
    flex: 1;
    min-width: 0;
    display: flex;
    flex-direction: column;
}
.top-row {
    height: 30px;
    flex: none;
    display: flex;
    border-bottom: 1px solid #cdcdcd;
}
.project-head {
    width: 349px;
    flex: none;
    display: flex;
    align-items: center;
    padding: 1px 0 0 9px;
    border-right: 1px solid #c9c9c9;
    border-bottom: 2px solid #fff;
    color: #444;
}
.proj-ic {
    margin-right: 5px;
}
.project-head .caret {
    margin-left: 10px;
}
.head-tools {
    margin-left: auto;
    display: flex;
    align-items: center;
    gap: 9px;
    padding-right: 7px;
}
.run-head .head-tools {
    padding-right: 8px;
}
.project-head .vsep {
    margin-left: 1px;
}
.target {
    margin-right: 4px;
}
.gear {
    fill: #6e6e6e;
}
.dash {
    width: 12px;
    height: 2px;
    margin-left: 5px;
    background: #6e6e6e;
}
.editor-tabs {
    flex: 1;
    display: flex;
    border-bottom: 2px solid #fff;
}
.etab {
    display: flex;
    align-items: center;
    height: 30px;
    padding: 0 6px 0 11px;
    font-size: 11px;
}
.etab span {
    margin: 0 6px 0 4px;
}
.etab.current {
    background: #f7f7f7;
    border-bottom: 3px solid #a8b3bf;
    padding: 0 9px 0 10px;
}
.run-head {
    height: 28px;
    flex: none;
    display: flex;
    align-items: center;
    padding-left: 6px;
    background: #dfe3ec;
    border-bottom: 1px solid #c8c8c8;
}
.run-label {
    width: 32px;
    padding-top: 1px;
}
.run-tab {
    width: 90px;
    height: 27px;
    display: flex;
    align-items: center;
    padding: 3px 0 0 13px;
    gap: 5px;
    border-bottom: 3px solid #3f7fc8;
}
.run-tab span {
    margin-right: 2px;
}
.run-body {
    flex: 1;
    min-height: 0;
    display: flex;
    background: #fff;
}
.tool-col {
    width: 29px;
    flex: none;
    display: flex;
    flex-direction: column;
    gap: 4px;
    padding-top: 3px;
    background: #ececec;
    border-right: 1px solid #c9c9c9;
}
.tool {
    width: 22px;
    height: 22px;
    margin: 0 3px;
    display: flex;
    align-items: center;
    justify-content: center;
    border-radius: 3px;
}
.tool.on {
    background: #d0d0d0;
}
.hsep {
    height: 1px;
    margin: 1px 4px;
    background: #cfcfcf;
}
.console {
    flex: 1;
    min-width: 0;
    margin: 0;
    padding: 12px 0 0 10px;
    overflow: hidden;
    font-family: "DejaVu Sans Mono", monospace;
    font-size: 11.640px;
    line-height: 18px;
    color: #222;
    background: #fff;
}
.rule {
    color: #4a4a4a;
}
.wrap {
    padding-left: 11px;
}

.tool-bar {
    height: 22px;
    flex: none;
    display: flex;
    align-items: stretch;
    padding-left: 25px;
    color: #3c3c3c;
    font-size: 11.200px;
    background: #ececec;
    border-top: 1px solid #c9c9c9;
    border-bottom: 1px solid #c9c9c9;
}
.tw {
    display: flex;
    align-items: center;
    gap: 4px;
    padding: 0 7px;
    margin-right: 5px;
}
.tw.active {
    gap: 6px;
    margin-left: -6px;
    margin-right: 6px;
    padding: 0 8px 0 12px;
    background: #bdbdbd;
}
.tw.event {
    margin-left: auto;
    margin-right: 24px;
}
.status-bar {
    height: 21px;
    flex: none;
    display: flex;
    align-items: center;
    padding-left: 6px;
    color: #3c3c3c;
    font-size: 11px;
    background: #ececec;
}
.build-msg {
    margin-left: 13px;
}
.status-right {
    margin-left: auto;
    display: flex;
    align-items: center;
    gap: 12px;
    padding-right: 11px;
    font-size: 11.500px;
}
.pos {
    margin-left: -1px;
}
.indent {
    font-size: 11px;
}
.lock {
    margin-left: -2px;
}
.t-badge {
    margin-left: -1px;
    width: 14px;
    height: 13px;
    font-family: "DejaVu Sans Mono", monospace;
    font-size: 8px;
    line-height: 13px;
    text-align: center;
    color: #3d6b2f;
    background: #a1d391;
}

/* dock */
.dock-area {
    flex: 1;
    min-height: 0;
    display: flex;
    justify-content: center;
    background: repeating-linear-gradient(160deg, #0b2538 0 3px, #10304a 3px 5px, #0c283c 5px 9px);
}
.dock {
    width: 1056px;
    display: flex;
    align-items: flex-start;
    padding: 5px 0 0 2px;
    background: #45596f;
    border-radius: 5px 5px 0 0;
}
.app {
    position: relative;
    width: 33px;
    height: 37px;
    flex: none;
    padding: 0 1.500px;
}
.app svg {
    width: 30px;
    height: 30px;
}
.app.on::after {
    content: "";
    position: absolute;
    left: 15px;
    top: 32px;
    width: 3px;
    height: 3px;
    border-radius: 50%;
    background: #0b0b0b;
}
.app.thumb {
    width: 35px;
    padding: 0;
}
.app.thumb svg {
    width: 33px;
}
.dock-sep {
    width: 1px;
    height: 31px;
    flex: none;
    margin: 0 6px 0 8px;
    background: #202d3b;
}
.dock-sep.after {
    margin: 0 4px 0 7px;
}
.badge {
    position: absolute;
    right: 0;
    top: -2px;
    width: 11px;
    height: 11px;
    border-radius: 50%;
    font-size: 8px;
    line-height: 11px;
    text-align: center;
    color: #fff;
    background: #e8232a;
}
.cal-m {
    font: 5px "Liberation Sans", sans-serif;
    fill: #fff;
    text-anchor: middle;
}
.cal-d {
    font: 14px "Liberation Sans", sans-serif;
    fill: #333;
    text-anchor: middle;
}
.tv {
    font: 600 10px "Liberation Sans", sans-serif;
    fill: #e8e8e8;
    text-anchor: middle;
}
.word {
    font: 700 10px "Liberation Sans", sans-serif;
    fill: #fff;
    text-anchor: middle;
}
.jb {
    font: 700 11px "Liberation Sans", sans-serif;
    fill: #fff;
}
```
